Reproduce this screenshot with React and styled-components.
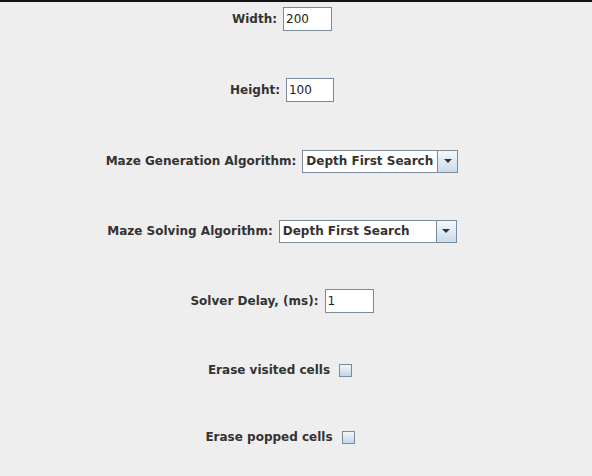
import React from 'react'
import styled, { createGlobalStyle } from "styled-components";

const Global = createGlobalStyle`
    html, body{
        margin:0;
        padding:0;
        background-color:#eeeeee;
    }
    body{
        font-family:"DejaVu Sans", "Liberation Sans", sans-serif;
        font-size:12px;
    }
`;

const Settings = () => {
    return (
        <>
            <Global />
            <Frame>
                <TopEdge />
                <Panel>
                    <Row $h={71}>
                        <Label>Width:</Label>
                        <Field $w={49}>200</Field>
                    </Row>
                    <Row $h={71}>
                        <Label>Height:</Label>
                        <Field $w={48}>100</Field>
                    </Row>
                    <Row $h={70}>
                        <Label>Maze Generation Algorithm:</Label>
                        <Combo $w={156}>
                            <ComboText>Depth First Search</ComboText>
                            <ArrowButton><Arrow /></ArrowButton>
                        </Combo>
                    </Row>
                    <Row $h={70}>
                        <Label>Maze Solving Algorithm:</Label>
                        <Combo $w={178}>
                            <ComboText>Depth First Search</ComboText>
                            <ArrowButton><Arrow /></ArrowButton>
                        </Combo>
                    </Row>
                    <Row $h={69}>
                        <Label>Solver Delay, (ms):</Label>
                        <Field $w={49}>1</Field>
                    </Row>
                    <Row $h={67}>
                        <Label>Erase visited cells</Label>
                        <CheckWrap><Check /></CheckWrap>
                    </Row>
                    <Row $h={54}>
                        <Label>Erase popped cells</Label>
                        <CheckWrap><Check /></CheckWrap>
                    </Row>
                </Panel>
            </Frame>
        </>
    )
}

const Frame=styled.div`
    width:592px;
    height:476px;
    overflow:hidden;
    background-color:#eeeeee;
`;

const TopEdge=styled.div`
    height:2px;
    background-color:#141414;
`;

// content is centred a bit left of the window middle, like the original
const Panel=styled.div`
    width:564px;
    display:flex;
    flex-direction:column;
`;

const Row=styled.div`
    height:${p=>p.$h}px;
    display:flex;
    justify-content:center;
    align-items:flex-start;
    gap:6px;
`;

const Label=styled.span`
    font-weight:bold;
    color:#333333;
    white-space:nowrap;
    line-height:34px;
`;

const Field=styled.div`
    box-sizing:border-box;
    width:${p=>p.$w}px;
    height:24px;
    margin-top:5px;
    background-color:#ffffff;
    border:1px solid #7a8a99;
    padding:0 2px;
    line-height:22px;
    color:#222222;
`;

const Combo=styled.div`
    box-sizing:border-box;
    width:${p=>p.$w}px;
    height:23px;
    margin-top:5.5px;
    display:flex;
    background-color:#ffffff;
    border:1px solid #7a8a99;
`;

const ComboText=styled.div`
    flex:1;
    padding-left:3px;
    font-weight:bold;
    color:#333333;
    line-height:21px;
    white-space:nowrap;
    overflow:hidden;
`;

const ArrowButton=styled.div`
    width:19px;
    border-left:1px solid #7a8a99;
    background:linear-gradient(#f4f8fc, #c9dbec);
    display:flex;
    justify-content:center;
    align-items:center;
`;

const Arrow=styled.div`
    width:0;
    height:0;
    border-left:4px solid transparent;
    border-right:4px solid transparent;
    border-top:4px solid #333333;
`;

const CheckWrap=styled.div`
    padding:4px;
    margin-top:6.5px;
    margin-left:-1px;
`;

const Check=styled.div`
    box-sizing:border-box;
    width:13px;
    height:13px;
    border:1px solid #7a8a99;
    background:linear-gradient(#f2f6fa, #c3d6ea);
`;

export default Settings
